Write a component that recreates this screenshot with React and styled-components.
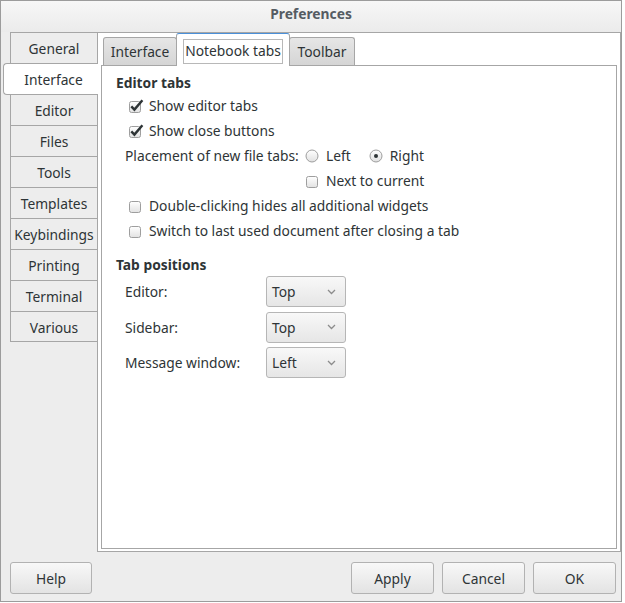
import React from 'react';
import styled, { createGlobalStyle } from 'styled-components';

const GlobalStyle = createGlobalStyle`
  body {
    margin: 0;
    background: #ffffff;
    font-family: "Noto Sans", "DejaVu Sans", sans-serif;
    font-size: 13.8px;
    color: #2e3436;
  }
  * { box-sizing: border-box; }
`;

const Window = styled.div`
  width: 622px;
  height: 602px;
  border: 1px solid #9c9c9c;
  background: #ededed;
  display: flex;
  flex-direction: column;
`;

const TitleBar = styled.div`
  height: 31px;
  flex: none;
  background: linear-gradient(#f7f7f7, #ebebeb);
  text-align: center;
  line-height: 25px;
  font-weight: bold;
  color: #555c63;
`;

const Body = styled.div`
  display: flex;
  height: 520px;
  flex: none;
`;

const Sidebar = styled.div`
  width: 96px;
  padding-left: 9px;
  display: flex;
  flex-direction: column;
`;

const SideTab = styled.div`
  height: ${(p) => (p.$active ? '32px' : '31px')};
  border-top: 1px solid #a6a6a6;
  border-left: 1px solid #a6a6a6;
  border-bottom: ${(p) => (p.$active || p.$last ? '1px solid #a6a6a6' : 'none')};
  background: ${(p) => (p.$active ? '#ffffff' : '#ededed')};
  margin-left: ${(p) => (p.$active ? '-7px' : '0')};
  margin-right: ${(p) => (p.$active ? '-1px' : '0')};
  margin-bottom: ${(p) => (p.$active ? '-1px' : '0')};
  border-radius: ${(p) => (p.$active ? '4px 0 0 4px' : '0')};
  position: relative;
  z-index: ${(p) => (p.$active ? 1 : 0)};
  display: flex;
  align-items: center;
  justify-content: center;
  padding-top: 1px;
  padding-left: ${(p) => (p.$active ? '5px' : '0')};
  white-space: nowrap;
`;

const OuterPage = styled.div`
  width: 524px;
  border: 1px solid #a6a6a6;
  background: #ffffff;
  padding: 0 3px 2px 3px;
  display: flex;
  flex-direction: column;
`;

const TabStrip = styled.div`
  height: 32px;
  flex: none;
  display: flex;
  align-items: flex-end;
  padding-left: 2px;
`;

const TopTab = styled.div`
  width: ${(p) => p.$w}px;
  height: ${(p) => (p.$active ? '33px' : '28px')};
  margin-bottom: ${(p) => (p.$active ? '-1px' : '0')};
  margin-left: ${(p) => (p.$first ? '0' : '-1px')};
  border: 1px solid #a6a6a6;
  border-bottom: none;
  border-top-color: ${(p) => (p.$active ? '#4a90d9' : '#a6a6a6')};
  border-radius: 3px 3px 0 0;
  background: ${(p) => (p.$active ? '#ffffff' : 'linear-gradient(#e6e6e6, #d5d5d5)')};
  position: relative;
  z-index: ${(p) => (p.$active ? 1 : 0)};
  padding: ${(p) => (p.$active ? '4px 6px 2px' : '0')};
  display: flex;
  align-items: center;
  justify-content: center;
  white-space: nowrap;
`;

const FocusLabel = styled.span`
  flex: 1;
  text-align: center;
  border: 1px solid #b8b8b8;
  padding: 1px 0 2px;
  line-height: 20px;
`;

const InnerPage = styled.div`
  flex: 1;
  border: 1px solid #a6a6a6;
  background: #ffffff;
  padding: 7px 14px;
`;

const SectionTitle = styled.div`
  font-weight: bold;
  height: 20px;
  line-height: 20px;
  margin-top: ${(p) => p.$gap || 0}px;
`;

const Row = styled.div`
  height: 25px;
  display: flex;
  align-items: center;
  gap: ${(p) => p.$gap ?? 4}px;
  padding-left: ${(p) => p.$indent || 0}px;
`;

const PlacementRow = styled.div`
  display: grid;
  grid-template-columns: 180px auto;
  padding-left: 9px;
`;

const Label = styled.div`
  height: 25px;
  line-height: 25px;
  white-space: nowrap;
`;

const Options = styled.div`
  display: flex;
  align-items: center;
  height: 25px;
`;

const Option = styled.label`
  display: flex;
  align-items: center;
  gap: ${(p) => p.$gap ?? 7}px;
  margin-right: ${(p) => p.$space || 0}px;
  margin-left: ${(p) => p.$shift || 0}px;
`;

const ComboGrid = styled.div`
  display: grid;
  grid-template-columns: 141px 80px;
  row-gap: 4.5px;
  padding-left: 9px;
  margin-top: 1px;
  align-items: center;
`;

const Combo = styled.div`
  height: 31px;
  border: 1px solid #b6b6b6;
  border-radius: 3px;
  background: linear-gradient(#f8f8f8, #e6e6e6);
  display: flex;
  align-items: center;
  justify-content: space-between;
  padding: 0 9px 0 5px;
`;

const ButtonBar = styled.div`
  display: flex;
  padding: 10px 5px 0 9px;
`;

const Spacer = styled.div`
  flex: 1;
`;

const Group = styled.div`
  display: flex;
  gap: 8px;
`;

const Button = styled.button`
  width: ${(p) => p.$w || 83}px;
  height: 32px;
  border: 1px solid #b2b2b2;
  border-radius: 3px;
  background: linear-gradient(#f8f8f8, #e3e3e3);
  font: inherit;
  color: #2e3436;
  padding: 0;
`;

const CheckBox = ({ checked }) => (
  <svg width="16" height="14" viewBox="0 0 16 14">
    <defs>
      <linearGradient id="cbg" x1="0" y1="0" x2="0" y2="1">
        <stop offset="0" stopColor="#ffffff" />
        <stop offset="1" stopColor="#e2e2e2" />
      </linearGradient>
    </defs>
    <rect x="0.5" y="2.5" width="11" height="11" rx="2" fill="url(#cbg)" stroke="#9e9e9e" />
    {checked && (
      <path d="M2.3 7.4 L5.4 10.6 L13.4 1.2" fill="none" stroke="#2e3436" strokeWidth="2.4" />
    )}
  </svg>
);

const Radio = ({ checked }) => (
  <svg width="14" height="14" viewBox="0 0 14 14">
    <defs>
      <linearGradient id="rbg" x1="0" y1="0" x2="0" y2="1">
        <stop offset="0" stopColor="#ffffff" />
        <stop offset="1" stopColor="#e0e0e0" />
      </linearGradient>
    </defs>
    <circle cx="7" cy="7" r="6" fill="url(#rbg)" stroke="#9e9e9e" />
    {checked && <circle cx="7" cy="7" r="2" fill="#2e3436" />}
  </svg>
);

const Chevron = () => (
  <svg width="9" height="6" viewBox="0 0 9 6">
    <path d="M1 1 L4.5 4.5 L8 1" fill="none" stroke="#8c8c8c" strokeWidth="1.3" />
  </svg>
);

const sideTabs = ['General', 'Interface', 'Editor', 'Files', 'Tools', 'Templates', 'Keybindings', 'Printing', 'Terminal', 'Various'];

const combos = [
  ['Editor:', 'Top'],
  ['Sidebar:', 'Top'],
  ['Message window:', 'Left'],
];

const App = () => {
  return (
    <>
      <GlobalStyle />
      <Window>
        <TitleBar>Preferences</TitleBar>
        <Body>
          <Sidebar>
            {sideTabs.map((t, i) => (
              <SideTab key={t} $active={t === 'Interface'} $last={i === sideTabs.length - 1}>
                {t}
              </SideTab>
            ))}
          </Sidebar>
          <OuterPage>
            <TabStrip>
              <TopTab $first $w={74}>Interface</TopTab>
              <TopTab $active $w={114}>
                <FocusLabel>Notebook tabs</FocusLabel>
              </TopTab>
              <TopTab $w={66}>Toolbar</TopTab>
            </TabStrip>
            <InnerPage>
              <SectionTitle>Editor tabs</SectionTitle>
              <Row $indent={13}>
                <CheckBox checked />
                Show editor tabs
              </Row>
              <Row $indent={13}>
                <CheckBox checked />
                Show close buttons
              </Row>
              <PlacementRow>
                <Label>Placement of new file tabs:</Label>
                <Options>
                  <Option $space={18}>
                    <Radio />
                    Left
                  </Option>
                  <Option>
                    <Radio checked />
                    Right
                  </Option>
                </Options>
                <div />
                <Options>
                  <Option $gap={4} $shift={1}>
                    <CheckBox />
                    Next to current
                  </Option>
                </Options>
              </PlacementRow>
              <Row $indent={13}>
                <CheckBox />
                Double-clicking hides all additional widgets
              </Row>
              <Row $indent={13}>
                <CheckBox />
                Switch to last used document after closing a tab
              </Row>
              <SectionTitle $gap={12}>Tab positions</SectionTitle>
              <ComboGrid>
                {combos.map(([label, value]) => (
                  <React.Fragment key={label}>
                    <div>{label}</div>
                    <Combo>
                      {value}
                      <Chevron />
                    </Combo>
                  </React.Fragment>
                ))}
              </ComboGrid>
            </InnerPage>
          </OuterPage>
        </Body>
        <ButtonBar>
          <Button $w={82}>Help</Button>
          <Spacer />
          <Group>
            <Button>Apply</Button>
            <Button>Cancel</Button>
            <Button>OK</Button>
          </Group>
        </ButtonBar>
      </Window>
    </>
  );
};

export default App;
